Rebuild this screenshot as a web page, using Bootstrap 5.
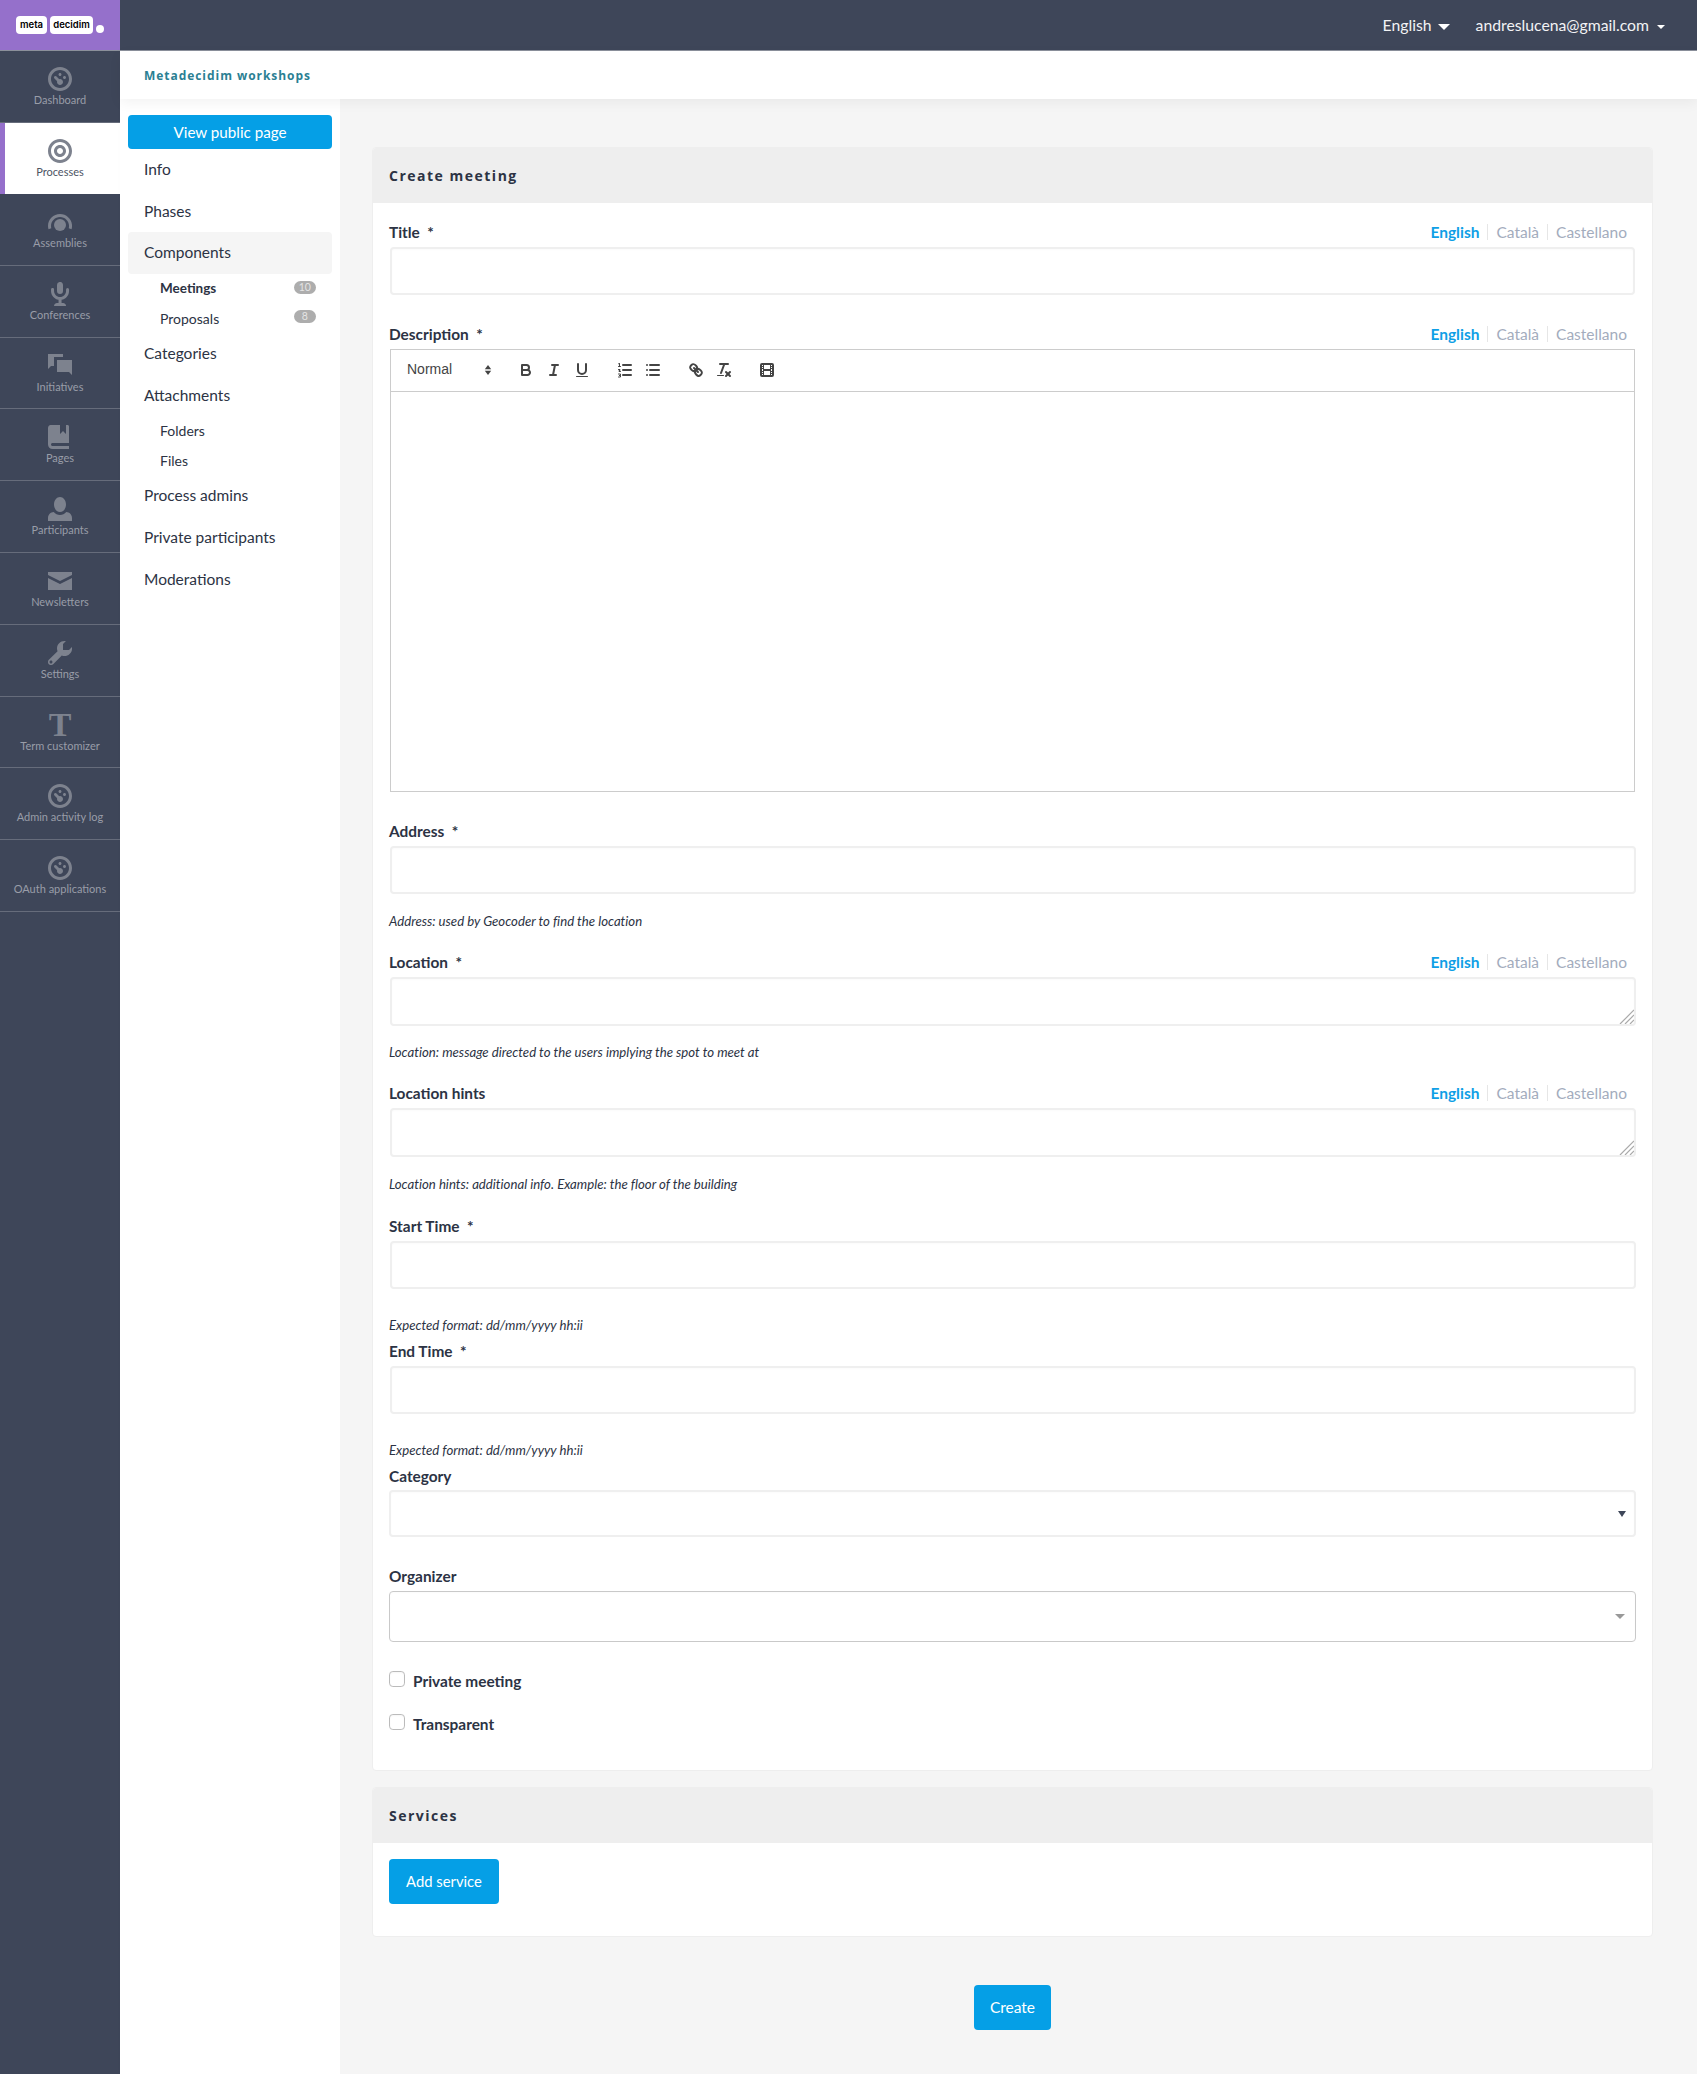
<!DOCTYPE html>
<html lang="en">
<head>
<meta charset="utf-8">
<title>Create meeting</title>
<link href="https://cdn.jsdelivr.net/npm/bootstrap@5.3.0/dist/css/bootstrap.min.css" rel="stylesheet">
<style>
body{font-family:"Lato","Liberation Sans",sans-serif;font-size:15.4px;color:#2c3344;background:#fff;margin:0}
.page-wrap{min-height:2074px;width:1697px;overflow:hidden}
.topbar{height:51px;background:#3e4659;border-bottom:1px solid #8b909b}
.logo-box{width:120px;height:50px;background:#9570cb;padding:16px 16px 0}
.logo-pill{height:18px;background:#fff;color:#000;font:600 9.5px/18px "Inter","Liberation Sans",sans-serif;border-radius:4px;text-align:center}
.pill-a{width:31px}.pill-b{width:43px;margin-left:3px}
.logo-dot{width:8px;height:8px;border-radius:50%;background:#fff;margin:9px 0 0 3px}
.top-bar-links{height:50px;padding-right:32px;gap:26px}
.top-link{color:#f2f3f5;font-size:15.75px;text-decoration:none}
.top-caret{display:inline-block;border:6px solid transparent;border-top-color:#fff;border-bottom:0;margin-left:6px;vertical-align:middle}
.top-caret.small-caret{border-width:4px;border-bottom:0;margin-left:8px}
.side-rail{width:120px;background:#3e4659;flex:none}
.rail-item{height:71.8px;display:block;text-align:center;text-decoration:none;color:#999da8;font-size:11px;line-height:14px;border-bottom:1px solid #666c7b;padding-top:16px}
.rail-item svg{display:block;margin:0 auto 2px;width:24px;height:24px;fill:#7d828e}
.rail-item.is-on{background:#fff;height:71px;border-left:5px solid #9570cb;border-bottom:0;color:#4d5463;padding-right:5px}
.rail-item.is-on svg{fill:#7d828e}
.rail-item.first-item{height:72px}
.rail-t{display:block;width:24px;height:24px;margin:0 auto 2px;font:700 34px/24px "Liberation Serif",serif;color:#7d828e}
.title-bar{height:48px;background:#fff;padding:0 24px;display:flex;align-items:center;box-shadow:0 4px 12px rgba(0,0,0,.05);position:relative;z-index:2}
.title-bar a{color:#2b7f93;font:700 12px "Open Sans",sans-serif;letter-spacing:.95px;text-decoration:none}
.sec-nav{width:220px;background:#fff;flex:none;padding:16px 8px;min-height:1975px;box-shadow:2px 0 6px rgba(0,0,0,.03)}
.btn-blue{background:#059fe6;border:0;color:#fff;font-size:15.2px;border-radius:4px}
.btn-blue:hover{background:#0590d0;color:#fff}
.view-btn{height:34px;padding:0;line-height:34px}
.sec-link{display:block;height:41.6px;line-height:41.6px;padding:0 16px;color:#2c3344;font-size:15.5px;text-decoration:none;border-radius:4px}
.sec-link.is-open{background:#f5f5f5}
.sec-sub{display:flex;justify-content:space-between;align-items:center;height:29.6px;padding:0 16px 0 32px;color:#2c3344;font-size:14px;text-decoration:none}
.sec-sub.is-bold{font-weight:700;font-size:13.5px}
.sec-count{background:#adadad;color:#e4e4e4;font-size:10.5px;font-weight:400;line-height:13px;width:22.5px;text-align:center;border-radius:7px;margin-top:-3px}
.main-pane{background:#f5f5f5;flex:1 1 auto;padding:48px 44px 44px 32px;min-width:0}
.form-panel{border:1px solid #eee;border-radius:4px;background:#fff;overflow:hidden}
.form-panel .card-header{height:55px;background:#eee;border:0;border-radius:0;padding:0 16px;display:flex;align-items:center;font:700 14px "Open Sans",sans-serif;letter-spacing:1.5px;color:#2c3344}
.form-panel .card-body{padding:17px 17px 0 16px}
.fld-head{height:24px;margin-bottom:3px;display:flex;justify-content:space-between;align-items:center;font-weight:700}
.fld-head>span{margin-top:2px}
.lang-tabs{display:flex;font-size:15.5px;font-weight:400;padding-right:8px}
.lang-tabs span{color:#a3acbd;padding:0 8px;border-left:1px solid #e6e6e6;line-height:16px}
.lang-tabs span:first-child{border:0;color:#0f9fe6;font-weight:700}
.lang-tabs span:last-child{padding-right:0}
.fld-input{height:48px;border:2px solid #efefef;border-radius:4px;box-shadow:inset 0 1px 2px rgba(0,0,0,.02);margin-left:1px;width:100%;display:block}
.fld-title{width:calc(100% - 1px)}
.fld-area{height:49px;min-height:49px;resize:vertical}
.fld-area::-webkit-resizer{background:url("data:image/svg+xml,%3Csvg xmlns='http://www.w3.org/2000/svg' viewBox='0 0 15 15'%3E%3Cpath stroke='%23aaa' stroke-width='1.200' d='M15 1 1 15M15 6 6 15M15 11 11 15'/%3E%3C/svg%3E") no-repeat}
.fld-cat{width:calc(100% + 1px);margin-left:0;height:47px;background-image:url("data:image/svg+xml,%3Csvg xmlns='http://www.w3.org/2000/svg' viewBox='0 0 8 6'%3E%3Cpath fill='%233e4659' d='M0 0h8L4 6z'/%3E%3C/svg%3E");background-size:8px 6px;background-position:right 8px center}
.fld-org{width:calc(100% + 1px);height:51px;border:1px solid #c9c9c9;margin-left:0;background-image:url("data:image/svg+xml,%3Csvg xmlns='http://www.w3.org/2000/svg' viewBox='0 0 10 5'%3E%3Cpath fill='%23999' d='M0 0h10L5 5z'/%3E%3C/svg%3E");background-size:10px 5px;background-position:right 10px center}
.fld-help{font-style:italic;font-size:13.2px;line-height:18px;color:#2c3344;margin:0;font-variant-ligatures:none}
.gap-27{margin-bottom:27px}
.help-wide{margin-top:18px;margin-bottom:20px}
.help-tight{margin-top:17px}
.help-last{margin-bottom:21px}
.help-near{margin-top:27px;margin-bottom:5px}
.head-tight{margin-bottom:2px}
.quill-box{border:1px solid #ccc;margin-left:1px;width:calc(100% - 1px);height:443px;display:flex;flex-direction:column}
.quill-bar{height:42px;border-bottom:1px solid #ccc;padding:7px 8px 9px;display:flex;align-items:center;font:500 14px "Liberation Sans",sans-serif;color:#444;flex:none}
.quill-picker{width:98px;padding-left:8px;margin-right:15px;display:flex;justify-content:space-between;align-items:center}
.quill-picker span{margin-top:-1px}
.quill-btn{width:28px;height:24px;padding:3px 5px;flex:none}
.quill-btn svg{display:block;width:18px;height:18px;fill:none;stroke:#444;stroke-width:2;stroke-linecap:round;stroke-linejoin:round}
.quill-btn svg .qf{fill:#444;stroke:none}
.quill-btn svg .qt{stroke-width:1}
.quill-gap{margin-right:15px}
.chk-row{display:flex;align-items:flex-start;font-weight:700;margin:0}
.chk-row input{width:16px;height:16px;margin:0 8px 0 0;border:1px solid #bbb;border-radius:3px;box-shadow:inset 0 1px 2px rgba(0,0,0,.04);flex:none}
.chk-row span{line-height:24px;margin-top:-2px}
.chk-one{margin-top:29px}.chk-two{margin-top:21px;padding-bottom:34px}
.svc-panel{margin-top:16px}
.svc-panel .card-body{padding:16px;height:93px}
.big-btn{height:45px;line-height:45px;padding:0}
.add-btn{width:110px;font-size:14.8px}
.create-wrap{margin-top:48px;text-align:center}
.create-btn{width:77px;font-size:15.5px}
</style>
</head>
<body>
<div class="page-wrap d-flex flex-column">
  <div class="topbar d-flex align-items-start flex-none">
    <div class="logo-box d-flex align-items-start">
      <div class="logo-pill pill-a">meta</div><div class="logo-pill pill-b">decidim</div><div class="logo-dot"></div>
    </div>
    <div class="top-bar-links ms-auto d-flex align-items-center">
      <a class="top-link" href="#">English<span class="top-caret"></span></a>
      <a class="top-link" href="#">andreslucena@gmail.com<span class="top-caret small-caret"></span></a>
    </div>
  </div>
  <div class="d-flex flex-grow-1">
    <nav class="side-rail">
      <a class="rail-item first-item" href="#"><svg viewBox="0 0 8 8"><path d="M4 0c-2.2 0-4 1.8-4 4s1.8 4 4 4 4-1.8 4-4-1.8-4-4-4zm0 1c1.66 0 3 1.34 3 3s-1.34 3-3 3-3-1.34-3-3 1.34-3 3-3zm0 1c-.28 0-.5.22-.5.5s.22.5.5.5.5-.22.5-.5-.22-.5-.5-.5zm-1.66 1a.5.5 0 0 0-.19.84l.91.91c-.02.08-.06.16-.06.25 0 .55.45 1 1 1s1-.45 1-1-.45-1-1-1c-.09 0-.17.04-.25.06l-.91-.91a.5.5 0 0 0-.44-.16.5.5 0 0 0-.06 0zm3.16 0c-.28 0-.5.22-.5.5s.22.5.5.5.5-.22.5-.5-.22-.5-.5-.5z"/></svg>Dashboard</a>
      <a class="rail-item is-on" href="#"><svg viewBox="0 0 8 8"><path d="M4 0c-2.2 0-4 1.8-4 4s1.8 4 4 4 4-1.8 4-4-1.8-4-4-4zm0 1c1.66 0 3 1.34 3 3s-1.34 3-3 3-3-1.34-3-3 1.34-3 3-3zm0 1c-1.11 0-2 .9-2 2s.89 2 2 2c1.1 0 2-.9 2-2s-.9-2-2-2zm0 1c.55 0 1 .45 1 1s-.45 1-1 1-1-.45-1-1 .45-1 1-1z"/></svg>Processes</a>
      <a class="rail-item" href="#"><svg viewBox="0 0 8 8"><path transform="translate(0 1.330)" d="M4 0c-2.200 0-4 1.800-4 4 0 .37.06.72.16 1.060l.94-.34c-.07-.23-.09-.47-.09-.72 0-1.660 1.340-3 3-3s3 1.340 3 3c0 .25-.04.49-.09.72l.94.34c.1-.34.16-.69.16-1.060 0-2.200-1.800-4-4-4z"/><circle cx="4" cy="5" r="2"/></svg>Assemblies</a>
      <a class="rail-item" href="#"><svg viewBox="0 0 8 8"><path transform="translate(1)" d="M2.910-.03a1 1 0 0 0-.13.03 1 1 0 0 0-.78 1v2a1 1 0 1 0 2 0v-2a1 1 0 0 0-1.09-1.030zm-2.560 2.030a.5.5 0 0 0-.34.5v.5c0 1.480 1.090 2.690 2.500 2.940v1.060h-.5c-.55 0-1 .45-1 1h4.010c0-.55-.45-1-1-1h-.5v-1.060c1.410-.24 2.500-1.460 2.500-2.940v-.5a.5.5 0 1 0-1 0v.5c0 1.110-.89 2-2 2-1.110 0-2-.89-2-2v-.5a.5.5 0 0 0-.59-.5.5.5 0 0 0-.06 0z"/></svg>Conferences</a>
      <a class="rail-item" href="#"><svg viewBox="0 0 8 8"><path d="M0 0v5l1-1h1v-3h3v-1h-5zm3 2v4h4l1 1v-5h-5z"/></svg>Initiatives</a>
      <a class="rail-item" href="#"><svg viewBox="0 0 8 8"><path d="M1 0c-.07 0-.13.01-.19.03-.39.08-.7.39-.78.78-.03.06-.03.12-.03.19v5.500c0 .83.67 1.500 1.500 1.500h5.500v-1h-5.500c-.28 0-.5-.22-.5-.5s.22-.5.5-.5h5.500v-5.500c0-.28-.22-.5-.5-.5h-.5v3l-1-1-1 1v-3h-3z"/></svg>Pages</a>
      <a class="rail-item" href="#"><svg viewBox="0 0 8 8"><path d="M4 0c-1.100 0-2 1.120-2 2.500s.9 2.500 2 2.500 2-1.120 2-2.500-.9-2.500-2-2.500zm-2.090 5c-1.060.05-1.910.92-1.910 2v1h8v-1c0-1.080-.84-1.950-1.910-2-.54.61-1.280 1-2.090 1-.81 0-1.550-.39-2.090-1z"/></svg>Participants</a>
      <a class="rail-item" href="#"><svg viewBox="0 0 8 8"><path transform="translate(0 1)" d="M0 0v1l4 2 4-2v-1h-8zm0 2v4h8v-4l-4 2-4-2z"/></svg>Newsletters</a>
      <a class="rail-item" href="#"><svg viewBox="0 0 8 8"><path d="M5.500 0c-1.380 0-2.500 1.120-2.500 2.500 0 .32.08.62.19.91l-2.910 2.880c-.39.39-.39 1.050 0 1.440.2.2.46.28.72.28.26 0 .52-.09.72-.28l2.880-2.910c.28.11.58.19.91.19 1.380 0 2.500-1.120 2.500-2.500 0-.16 0-.32-.03-.47l-.97.97h-2v-2l.97-.97c-.15-.03-.31-.03-.47-.03zm-4.500 6.500c.28 0 .5.22.5.5s-.22.5-.5.5-.5-.22-.5-.5.22-.5.5-.5z"/></svg>Settings</a>
      <a class="rail-item" href="#"><span class="rail-t">T</span>Term customizer</a>
      <a class="rail-item" href="#"><svg viewBox="0 0 8 8"><path d="M4 0c-2.200 0-4 1.800-4 4s1.800 4 4 4 4-1.800 4-4-1.800-4-4-4zm0 1c1.660 0 3 1.340 3 3s-1.340 3-3 3-3-1.340-3-3 1.340-3 3-3zm0 1c-.28 0-.5.22-.5.5s.22.5.5.5.5-.22.5-.5-.22-.5-.5-.5zm-1.660 1a.5.5 0 0 0-.19.84l.91.91c-.02.08-.06.16-.06.25 0 .55.45 1 1 1s1-.45 1-1-.45-1-1-1c-.09 0-.17.04-.25.06l-.91-.91a.5.5 0 0 0-.44-.16.5.5 0 0 0-.06 0zm3.160 0c-.28 0-.5.22-.5.5s.22.5.5.5.5-.22.5-.5-.22-.5-.5-.5z"/></svg>Admin activity log</a>
      <a class="rail-item" href="#"><svg viewBox="0 0 8 8"><path d="M4 0c-2.200 0-4 1.800-4 4s1.800 4 4 4 4-1.800 4-4-1.800-4-4-4zm0 1c1.660 0 3 1.340 3 3s-1.340 3-3 3-3-1.340-3-3 1.340-3 3-3zm0 1c-.28 0-.5.22-.5.5s.22.5.5.5.5-.22.5-.5-.22-.5-.5-.5zm-1.660 1a.5.5 0 0 0-.19.84l.91.91c-.02.08-.06.16-.06.25 0 .55.45 1 1 1s1-.45 1-1-.45-1-1-1c-.09 0-.17.04-.25.06l-.91-.91a.5.5 0 0 0-.44-.16.5.5 0 0 0-.06 0zm3.160 0c-.28 0-.5.22-.5.5s.22.5.5.5.5-.22.5-.5-.22-.5-.5-.5z"/></svg>OAuth applications</a>
    </nav>
    <div class="flex-grow-1 d-flex flex-column" style="min-width:0">
      <div class="title-bar"><a href="#">Metadecidim workshops</a></div>
      <div class="d-flex flex-grow-1">
        <aside class="sec-nav">
          <a class="btn btn-blue view-btn w-100" href="#">View public page</a>
          <a class="sec-link" href="#">Info</a>
          <a class="sec-link" href="#">Phases</a>
          <a class="sec-link is-open" href="#">Components</a>
          <a class="sec-sub is-bold" href="#">Meetings<span class="sec-count">10</span></a>
          <a class="sec-sub" href="#">Proposals<span class="sec-count">8</span></a>
          <a class="sec-link" href="#">Categories</a>
          <a class="sec-link" href="#">Attachments</a>
          <a class="sec-sub" href="#">Folders</a>
          <a class="sec-sub" href="#">Files</a>
          <a class="sec-link" href="#">Process admins</a>
          <a class="sec-link" href="#">Private participants</a>
          <a class="sec-link" href="#">Moderations</a>
        </aside>
        <main class="main-pane">
          <form>
            <div class="card form-panel">
              <div class="card-header">Create meeting</div>
              <div class="card-body">
                <div class="fld-head"><span>Title&nbsp; *</span><div class="lang-tabs"><span>English</span><span>Català</span><span>Castellano</span></div></div>
                <input class="form-control fld-input fld-title gap-27" type="text" aria-label="Title">

                <div class="fld-head"><span>Description&nbsp; *</span><div class="lang-tabs"><span>English</span><span>Català</span><span>Castellano</span></div></div>
                <div class="quill-box gap-27">
                  <div class="quill-bar">
                    <div class="quill-picker"><span>Normal</span><svg width="18" height="18" viewBox="0 0 18 18"><polygon fill="#444" points="5.800 9.700 9 14 12.200 9.700"/><polygon fill="#444" points="5.800 8.300 9 4 12.200 8.300"/></svg></div>
                    <div class="quill-btn"><svg viewBox="0 0 18 18"><path d="M5,4H9.5A2.5,2.5,0,0,1,12,6.5v0A2.5,2.5,0,0,1,9.5,9H5V4Z"/><path d="M5,9h5.500A2.500,2.500,0,0,1,13,11.500v0A2.500,2.500,0,0,1,10.500,14H5V9Z"/></svg></div>
                    <div class="quill-btn"><svg viewBox="0 0 18 18"><line x1="7" x2="13" y1="4" y2="4"/><line x1="5" x2="11" y1="14" y2="14"/><line x1="8" x2="10" y1="14" y2="4"/></svg></div>
                    <div class="quill-btn quill-gap"><svg viewBox="0 0 18 18"><path d="M5,3V9a4,4,0,0,0,4,4H9a4,4,0,0,0,4-4V3"/><rect class="qf" height="1" rx=".5" ry=".5" width="12" x="3" y="15"/></svg></div>
                    <div class="quill-btn"><svg viewBox="0 0 18 18"><line x1="7" x2="15" y1="4" y2="4"/><line x1="7" x2="15" y1="9" y2="9"/><line x1="7" x2="15" y1="14" y2="14"/><line class="qt" x1="2.500" x2="4.500" y1="5.500" y2="5.500"/><path class="qf" d="M3.500,6A.5,.5,0,0,1,3,5.500V3.085l-.276.138C2.500,3.300,2.200,3.200,2.050,3s0-.4.220-.45l1-.5A.5,.5,0,0,1,4,2.500v3A.5,.5,0,0,1,3.500,6Z"/><path class="qt" d="M2.500,8.500h1.500v1h-1v1h1.500"/><path class="qt" d="M2.500,13h2v1.500h-1.500h1.500v1.500h-2"/></svg></div>
                    <div class="quill-btn quill-gap"><svg viewBox="0 0 18 18"><line x1="6" x2="15" y1="4" y2="4"/><line x1="6" x2="15" y1="9" y2="9"/><line x1="6" x2="15" y1="14" y2="14"/><line x1="3" x2="3" y1="4" y2="4"/><line x1="3" x2="3" y1="9" y2="9"/><line x1="3" x2="3" y1="14" y2="14"/></svg></div>
                    <div class="quill-btn"><svg viewBox="0 0 18 18"><line x1="7" x2="11" y1="7" y2="11"/><path d="M8.900,4.577a3.476,3.476,0,0,1,.36,4.679A3.476,3.476,0,0,1,4.577,8.900C3.185,7.500,2.035,6.400,4.217,4.217S7.500,3.185,8.900,4.577Z"/><path d="M13.423,9.100a3.476,3.476,0,0,0-4.679-.36,3.476,3.476,0,0,0,.36,4.679c1.392,1.392,2.500,2.542,4.679.36S14.815,10.500,13.423,9.100Z"/></svg></div>
                    <div class="quill-btn quill-gap"><svg viewBox="0 0 18 18"><line x1="5" x2="13" y1="3" y2="3"/><line x1="6" x2="9.350" y1="12" y2="3"/><line x1="11" x2="15" y1="11" y2="15"/><line x1="15" x2="11" y1="11" y2="15"/><rect class="qf" height="1" rx=".5" ry=".5" width="7" x="2" y="14"/></svg></div>
                    <div class="quill-btn"><svg viewBox="0 0 18 18"><rect x="3" y="3" width="12" height="12" rx="1"/><rect class="qf" x="5" y="3" width="1" height="12"/><rect class="qf" x="12" y="3" width="1" height="12"/><rect class="qf" x="5" y="8" width="8" height="2"/><rect class="qf" x="3" y="5" width="3" height="1"/><rect class="qf" x="3" y="7" width="3" height="1"/><rect class="qf" x="3" y="10" width="3" height="1"/><rect class="qf" x="3" y="12" width="3" height="1"/><rect class="qf" x="12" y="5" width="3" height="1"/><rect class="qf" x="12" y="7" width="3" height="1"/><rect class="qf" x="12" y="10" width="3" height="1"/><rect class="qf" x="12" y="12" width="3" height="1"/></svg></div>
                  </div>
                </div>

                <div class="fld-head"><span>Address&nbsp; *</span></div>
                <input class="form-control fld-input" type="text" aria-label="Address">
                <p class="fld-help help-wide">Address: used by Geocoder to find the location</p>

                <div class="fld-head"><span>Location&nbsp; *</span><div class="lang-tabs"><span>English</span><span>Català</span><span>Castellano</span></div></div>
                <textarea class="form-control fld-input fld-area" aria-label="Location"></textarea>
                <p class="fld-help help-wide help-tight">Location: message directed to the users implying the spot to meet at</p>

                <div class="fld-head"><span>Location hints</span><div class="lang-tabs"><span>English</span><span>Català</span><span>Castellano</span></div></div>
                <textarea class="form-control fld-input fld-area" aria-label="Location hints"></textarea>
                <p class="fld-help help-wide help-last">Location hints: additional info. Example: the floor of the building</p>

                <div class="fld-head"><span>Start Time&nbsp; *</span></div>
                <input class="form-control fld-input" type="text" aria-label="Start Time">
                <p class="fld-help help-near">Expected format: dd/mm/yyyy hh:ii</p>

                <div class="fld-head"><span>End Time&nbsp; *</span></div>
                <input class="form-control fld-input" type="text" aria-label="End Time">
                <p class="fld-help help-near">Expected format: dd/mm/yyyy hh:ii</p>

                <div class="fld-head head-tight"><span>Category</span></div>
                <select class="form-select fld-input fld-cat gap-27" aria-label="Category"><option></option></select>

                <div class="fld-head"><span>Organizer</span></div>
                <select class="form-select fld-input fld-org" aria-label="Organizer"><option></option></select>

                <label class="chk-row chk-one"><input class="form-check-input" type="checkbox"><span>Private meeting</span></label>
                <label class="chk-row chk-two"><input class="form-check-input" type="checkbox"><span>Transparent</span></label>
              </div>
            </div>
            <div class="card form-panel svc-panel">
              <div class="card-header">Services</div>
              <div class="card-body"><a class="btn btn-blue big-btn add-btn" href="#">Add service</a></div>
            </div>
            <div class="create-wrap"><button class="btn btn-blue big-btn create-btn" type="button">Create</button></div>
          </form>
        </main>
      </div>
    </div>
  </div>
</div>
<script src="https://cdn.jsdelivr.net/npm/bootstrap@5.3.0/dist/js/bootstrap.bundle.min.js"></script>
</body>
</html>
